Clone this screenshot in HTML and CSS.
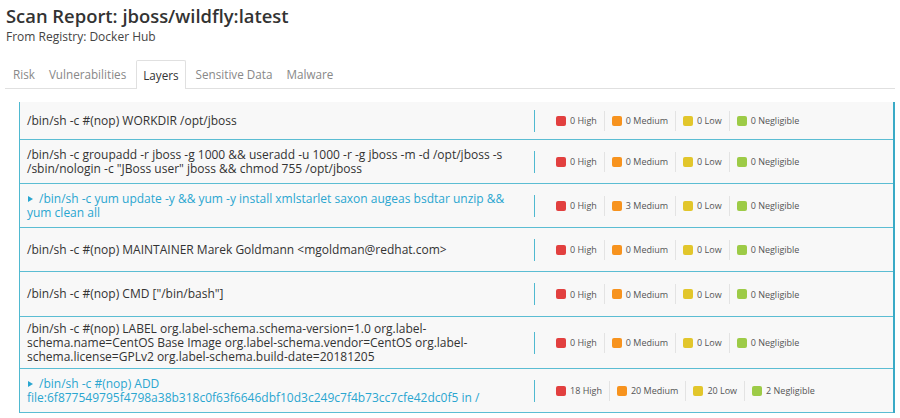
FILE: index.html
```html
<!DOCTYPE html>
<html lang="en">

<head>
    <meta charset="UTF-8">
    <meta name="viewport" content="width=device-width, initial-scale=1.0">
    <title>Scan Report</title>
    <link rel="stylesheet" href="styles.css">
</head>

<body>
    <div class="header">
        <h1>Scan Report: jboss/wildfly:latest</h1>
        <p class="registry">From Registry: Docker Hub</p>
    </div>

    <div class="tabs">
        <a href="#">Risk</a>
        <a href="#">Vulnerabilities</a>
        <a href="#" class="active">Layers</a>
        <a href="#">Sensitive Data</a>
        <a href="#">Malware</a>
    </div>

    <div class="layers">
        <div class="layer first">
            <div class="cmd">/bin/sh -c #(nop) WORKDIR /opt/jboss</div>
            <div class="counts">
                <span class="count"><i class="sq high"></i>0 High</span>
                <span class="count"><i class="sq medium"></i>0 Medium</span>
                <span class="count"><i class="sq low"></i>0 Low</span>
                <span class="count"><i class="sq neg"></i>0 Negligible</span>
            </div>
        </div>

        <div class="layer">
            <div class="cmd">/bin/sh -c groupadd -r jboss -g 1000 &amp;&amp; useradd -u 1000 -r -g jboss -m -d /opt/jboss -s /sbin/nologin -c "JBoss user" jboss &amp;&amp; chmod 755 /opt/jboss</div>
            <div class="counts">
                <span class="count"><i class="sq high"></i>0 High</span>
                <span class="count"><i class="sq medium"></i>0 Medium</span>
                <span class="count"><i class="sq low"></i>0 Low</span>
                <span class="count"><i class="sq neg"></i>0 Negligible</span>
            </div>
        </div>

        <div class="layer">
            <div class="cmd link"><i class="arrow"></i>/bin/sh -c yum update -y &amp;&amp; yum -y install xmlstarlet saxon augeas bsdtar unzip &amp;&amp; yum clean all</div>
            <div class="counts">
                <span class="count"><i class="sq high"></i>0 High</span>
                <span class="count"><i class="sq medium"></i>3 Medium</span>
                <span class="count"><i class="sq low"></i>0 Low</span>
                <span class="count"><i class="sq neg"></i>0 Negligible</span>
            </div>
        </div>

        <div class="layer">
            <div class="cmd">/bin/sh -c #(nop) MAINTAINER Marek Goldmann &lt;mgoldman@redhat.com&gt;</div>
            <div class="counts">
                <span class="count"><i class="sq high"></i>0 High</span>
                <span class="count"><i class="sq medium"></i>0 Medium</span>
                <span class="count"><i class="sq low"></i>0 Low</span>
                <span class="count"><i class="sq neg"></i>0 Negligible</span>
            </div>
        </div>

        <div class="layer mid">
            <div class="cmd">/bin/sh -c #(nop) CMD ["/bin/bash"]</div>
            <div class="counts">
                <span class="count"><i class="sq high"></i>0 High</span>
                <span class="count"><i class="sq medium"></i>0 Medium</span>
                <span class="count"><i class="sq low"></i>0 Low</span>
                <span class="count"><i class="sq neg"></i>0 Negligible</span>
            </div>
        </div>

        <div class="layer tall">
            <div class="cmd">/bin/sh -c #(nop) LABEL org.label-schema.schema-version=1.0 org.label-schema.name=CentOS Base Image org.label-schema.vendor=CentOS org.label-schema.license=GPLv2 org.label-schema.build-date=20181205</div>
            <div class="counts">
                <span class="count"><i class="sq high"></i>0 High</span>
                <span class="count"><i class="sq medium"></i>0 Medium</span>
                <span class="count"><i class="sq low"></i>0 Low</span>
                <span class="count"><i class="sq neg"></i>0 Negligible</span>
            </div>
        </div>

        <div class="layer">
            <div class="cmd link"><i class="arrow"></i>/bin/sh -c #(nop) ADD file:6f877549795f4798a38b318c0f63f6646dbf10d3c249c7f4b73cc7cfe42dc0f5 in /</div>
            <div class="counts">
                <span class="count"><i class="sq high"></i>18 High</span>
                <span class="count"><i class="sq medium"></i>20 Medium</span>
                <span class="count"><i class="sq low"></i>20 Low</span>
                <span class="count"><i class="sq neg"></i>2 Negligible</span>
            </div>
        </div>
    </div>
</body>

</html>
```

FILE: styles.css
```css
body {
    margin: 0;
    background-color: white;
    font-family: "Open Sans", "Noto Sans", sans-serif;
    color: #333;
}

.header {
    padding: 3px 6px 0;
}

.header h1 {
    margin: 0;
    font-size: 18.4px;
    font-weight: 600;
    line-height: 26px;
    color: #333;
}

.registry {
    margin: 0;
    font-size: 12px;
    line-height: 16px;
    color: #444;
}

.tabs {
    display: flex;
    margin: 15px 5px 0;
    padding-left: 4px;
    border-bottom: 1px solid #e0e0e0;
}

.tabs a {
    font-size: 11.7px;
    line-height: 27px;
    padding: 0 3px;
    margin-right: 6px;
    color: #888;
    text-decoration: none;
    border: 1px solid transparent;
    border-bottom: none;
}

.tabs a.active {
    color: #333;
    background-color: white;
    border-color: #e0e0e0;
    padding: 0 6px;
    margin-bottom: -1px;
    border-radius: 2px 2px 0 0;
    line-height: 28px;
}

/* Layers table */
.layers {
    margin: 13px 0 0 19px;
    width: 873px;
    border-left: 1px solid #4fb9d0;
    border-right: 2px solid #3aaac6;
}

.layer {
    display: flex;
    align-items: center;
    height: 43px;
    background-color: #f8f8f8;
    border-bottom: 1px solid #5bbdd3;
}

.layer.first {
    height: 37px;
}

.layer.mid {
    height: 44px;
}

.layer.tall {
    height: 51px;
}

.cmd {
    width: 500px;
    padding: 0 7px;
    font-size: 12px;
    line-height: 14px;
    color: #333;
}

.cmd.link {
    color: #2aa6d0;
    cursor: pointer;
}

/* small expand triangle */
.arrow {
    display: inline-block;
    width: 0;
    height: 0;
    border-left: 5px solid #2aa6d0;
    border-top: 3px solid transparent;
    border-bottom: 3px solid transparent;
    margin: 0 6px 1px 1px;
}

.counts {
    display: flex;
    align-items: center;
    height: 22px;
    padding-left: 21px;
    border-left: 1px solid #4fb9d0;
}

.count {
    display: flex;
    align-items: center;
    font-size: 9px;
    color: #555;
    padding-right: 7px;
    margin-right: 7px;
    height: 20px;
    border-right: 1px solid #e3e3e3;
}

.count:last-child {
    border-right: none;
}

.sq {
    display: inline-block;
    width: 10px;
    height: 10px;
    border-radius: 2px;
    margin-right: 4px;
}

.sq.high {
    background-color: #e2403f;
}

.sq.medium {
    background-color: #f7931e;
}

.sq.low {
    background-color: #e2c62b;
}

.sq.neg {
    background-color: #9dcb47;
}
```
